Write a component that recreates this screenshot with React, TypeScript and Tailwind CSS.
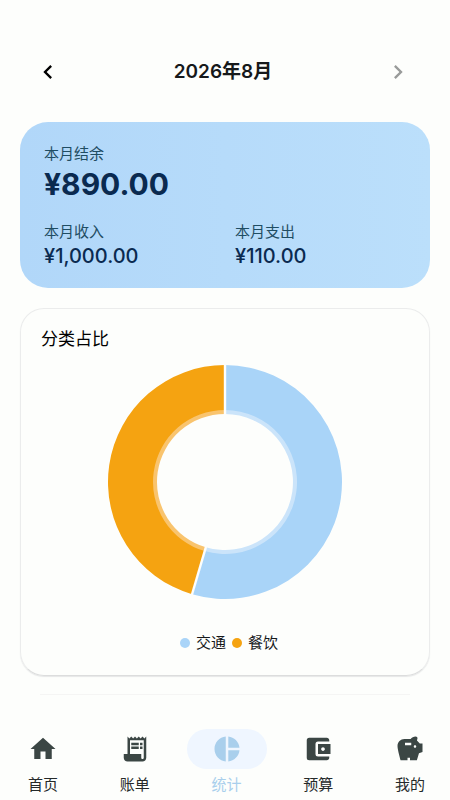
import { useState } from 'react'
import type { IconType } from 'react-icons'
import {
  MdAccountBalanceWallet,
  MdChevronLeft,
  MdChevronRight,
  MdHome,
  MdPieChart,
  MdReceiptLong,
  MdSavings,
} from 'react-icons/md'

interface Category {
  name: string
  amount: number
  fill: string
  edge: string
}

const categories: Category[] = [
  { name: '交通', amount: 60, fill: '#a9d4f8', edge: '#cbe4fa' },
  { name: '餐饮', amount: 50, fill: '#f5a311', edge: '#f9c46e' },
]

const tabs: { label: string; icon: IconType }[] = [
  { label: '首页', icon: MdHome },
  { label: '账单', icon: MdReceiptLong },
  { label: '统计', icon: MdPieChart },
  { label: '预算', icon: MdAccountBalanceWallet },
  { label: '我的', icon: MdSavings },
]

const point = (r: number, turn: number) => {
  const a = turn * 2 * Math.PI
  return `${(r * Math.sin(a)).toFixed(2)} ${(-r * Math.cos(a)).toFixed(2)}`
}

// Ring segment between two turns (0..1), clockwise from the top
const segment = (outer: number, inner: number, from: number, to: number) => {
  const large = to - from > 0.5 ? 1 : 0
  return `M${point(outer, from)} A${outer} ${outer} 0 ${large} 1 ${point(outer, to)} L${point(inner, to)} A${inner} ${inner} 0 ${large} 0 ${point(inner, from)}Z`
}

function DonutChart({ data }: { data: Category[] }) {
  const total = data.reduce((sum, c) => sum + c.amount, 0)
  let turn = 0
  const slices = data.map((c) => {
    const from = turn
    turn += c.amount / total
    return { ...c, from, to: turn }
  })

  return (
    <svg viewBox="-118 -118 236 236" className="w-[236px] h-[236px]" role="img" aria-label="分类占比">
      {slices.map((s) => (
        <g key={s.name}>
          <path d={segment(117, 71, s.from, s.to)} fill={s.fill} />
          <path d={segment(72, 68, s.from, s.to)} fill={s.edge} />
        </g>
      ))}
      {slices.map((s) => (
        <path key={s.name} d={`M${point(66, s.from)} L${point(118, s.from)}`} stroke="#fdfefc" strokeWidth="2.4" />
      ))}
    </svg>
  )
}

export default function App() {
  const [month, setMonth] = useState(8)
  const [active, setActive] = useState('统计')

  return (
    <div className="min-h-screen flex flex-col bg-[#fdfefc] text-[#16191b] font-['Inter','Noto_Sans_CJK_SC',sans-serif]">
      <header className="flex items-center justify-between pl-8 pr-9 pt-14">
        <button
          aria-label="上个月"
          onClick={() => setMonth((m) => Math.max(1, m - 1))}
          className="w-8 h-8 flex items-center justify-center text-black"
        >
          <MdChevronLeft size={28} />
        </button>
        <h1 className="text-[19px] leading-8 font-semibold">2026年{month}月</h1>
        <button
          aria-label="下个月"
          onClick={() => setMonth((m) => Math.min(8, m + 1))}
          className="w-8 h-8 flex items-center justify-center text-[#999b9a]"
        >
          <MdChevronRight size={28} />
        </button>
      </header>

      <main className="flex-1 flex flex-col px-5 pt-[34px]">
        <section className="rounded-[28px] bg-linear-to-r from-[#b1d7f9] to-[#bbdffb] px-6 pt-5 pb-5 text-[#0a2a50]">
          <p className="text-[15px] leading-6 text-[#1f4d63]">本月结余</p>
          <p className="text-3xl leading-9 font-bold">¥890.00</p>
          <div className="grid grid-cols-2 gap-5 mt-[18px]">
            <div>
              <p className="text-[15px] leading-6 text-[#1f4d63]">本月收入</p>
              <p className="text-xl leading-6 font-medium">¥1,000.00</p>
            </div>
            <div>
              <p className="text-[15px] leading-6 text-[#1f4d63]">本月支出</p>
              <p className="text-xl leading-6 font-medium">¥110.00</p>
            </div>
          </div>
        </section>

        <section className="mt-5 rounded-3xl border border-[#ebecec] border-b-[#dcdddd] shadow-[0_1px_1px_#e6e7e7] px-5 pt-4 pb-5">
          <h2 className="text-[17px] leading-7 text-black">分类占比</h2>
          <div className="flex justify-center mt-[11px]">
            <DonutChart data={categories} />
          </div>
          <ul className="flex justify-center gap-1.5 mt-[31px] pl-2">
            {categories.map((c) => (
              <li key={c.name} className="flex items-center gap-1.5 text-[15px] leading-6">
                <span className="w-2.5 h-2.5 rounded-full" style={{ backgroundColor: c.fill }} />
                {c.name}
              </li>
            ))}
          </ul>
        </section>

        <hr className="mt-[18px] mx-5 border-[#f5f5f4]" />
      </main>

      <nav className="flex justify-between pl-[3px] pb-[3px]">
        {tabs.map(({ label, icon: Icon }) => {
          const on = label === active
          return (
            <button
              key={label}
              onClick={() => setActive(label)}
              aria-current={on ? 'page' : undefined}
              className={`w-20 flex flex-col items-center gap-1 ${on ? 'text-[#a9cfec]' : 'text-[#3b4644]'}`}
            >
              <span className={`w-full h-10 rounded-full flex items-center justify-center ${on ? 'bg-[#eff6ff]' : ''}`}>
                <Icon size={30} />
              </span>
              <span className={`text-[15px] leading-6 ${on ? '' : 'text-[#252a2a]'}`}>{label}</span>
            </button>
          )
        })}
      </nav>
    </div>
  )
}
